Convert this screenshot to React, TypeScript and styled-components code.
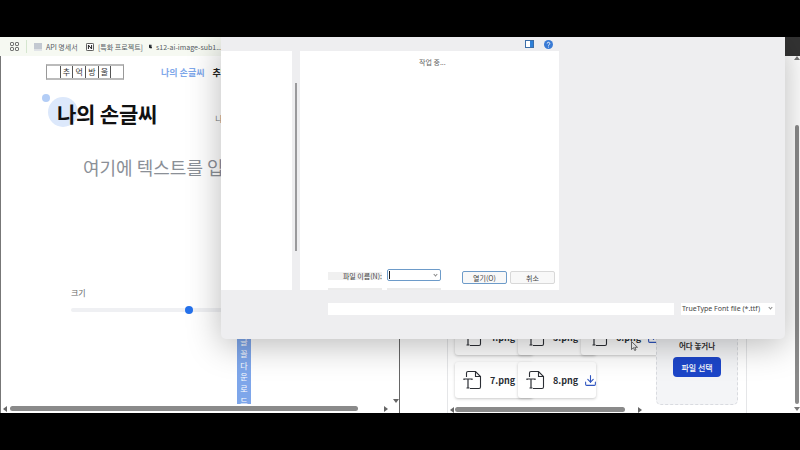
import styled, { createGlobalStyle } from "styled-components";
import { Download } from "lucide-react";

const GlobalStyle = createGlobalStyle`
  html, body {
    margin: 0;
    padding: 0;
    background: #000;
  }
  * {
    box-sizing: border-box;
  }
`;

const Screen = styled.div`
  width: 800px;
  height: 450px;
  overflow: hidden;
  display: flex;
  flex-direction: column;
  background: #000;
  font-family: "Noto Sans CJK KR", "Noto Sans", sans-serif;
`;

const Letterbox = styled.div`
  height: 37px;
  flex: none;
  background: #000;
`;

const Stage = styled.div`
  position: relative;
  height: 376px;
  flex: none;
  display: flex;
  flex-direction: column;
  background: #fff;
  overflow: hidden;
`;

const BookmarkBar = styled.div`
  height: 19px;
  flex: none;
  display: flex;
  align-items: center;
  padding-left: 10px;
  background: #f6f9f2;
`;

const Bookmark = styled.div<{ $w: number }>`
  width: ${(p) => p.$w}px;
  flex: none;
  display: flex;
  align-items: center;
  gap: 4px;
  font-size: 7px;
  color: #555b63;
  white-space: nowrap;
`;

const BarDivider = styled.div`
  width: 1px;
  height: 13px;
  margin: 0 7px 0 7px;
  background: #d5e6cf;
`;

const Corner = styled.div`
  width: 15px;
  height: 19px;
  margin-left: auto;
  background: #333;
`;

const Panes = styled.div`
  flex: 1;
  min-height: 0;
  display: flex;
`;

const LeftPane = styled.div`
  width: 400px;
  flex: none;
  display: flex;
  flex-direction: column;
  border-left: 1px solid #777;
  border-right: 1px solid #666;
  background: #fff;
`;

const LeftScroll = styled.div`
  flex: 1;
  min-height: 0;
  overflow: hidden;
  padding-top: 8px;
  display: flex;
  flex-direction: column;
`;

const Header = styled.div`
  display: flex;
  align-items: center;
  height: 16px;
  flex: none;
  padding-left: 45px;
`;

const Logo = styled.div`
  width: 78px;
  height: 16px;
  display: grid;
  grid-template-columns: repeat(6, 1fr);
  border: 1px solid #999;
  border-top: 2px solid #bbb;
  border-bottom: 2px solid #bbb;
  background: #fff;
`;

const LogoCell = styled.div`
  display: flex;
  align-items: center;
  justify-content: center;
  font-family: "Noto Sans CJK KR", serif;
  font-size: 8px;
  line-height: 1;
  color: #333;
  border-left: 1px solid #555;
  &:first-child {
    border-left: none;
  }
`;

const NavItem = styled.div<{ $active?: boolean }>`
  font-size: 9px;
  font-weight: 700;
  white-space: nowrap;
  color: ${(p) => (p.$active ? "#7fa8ea" : "#222")};
  margin-left: ${(p) => (p.$active ? "37px" : "8px")};
`;

const TitleRow = styled.div`
  display: flex;
  align-items: baseline;
  flex: none;
  margin-top: 21px;
  padding-left: 56px;
`;

const Title = styled.h1`
  position: relative;
  margin: 0;
  font-size: 21px;
  line-height: 24px;
  font-weight: 700;
  letter-spacing: -0.2px;
  color: #111;
  white-space: nowrap;
  z-index: 0;
  &::before {
    content: "";
    position: absolute;
    left: -9px;
    top: -4px;
    width: 30px;
    height: 30px;
    border-radius: 50%;
    background: #dce8fb;
    z-index: -1;
  }
  &::after {
    content: "";
    position: absolute;
    left: -15px;
    top: -7px;
    width: 8px;
    height: 8px;
    border-radius: 50%;
    background: #b3cdf6;
    z-index: -1;
  }
`;

const Subtitle = styled.span`
  margin-left: 58px;
  font-size: 8px;
  color: #777;
  white-space: nowrap;
`;

const Placeholder = styled.div`
  flex: none;
  margin-top: 29px;
  padding-left: 82px;
  font-size: 18px;
  line-height: 26px;
  color: #8b9097;
  white-space: nowrap;
`;

const SizeLabel = styled.div`
  flex: none;
  margin-top: 107px;
  padding-left: 70px;
  font-size: 8px;
  line-height: 12px;
  color: #666;
`;

const Slider = styled.div`
  position: relative;
  flex: none;
  width: 240px;
  height: 4px;
  margin: 9px 0 0 70px;
  border-radius: 2px;
  background: #eff0f3;
`;

const SliderThumb = styled.div`
  position: absolute;
  top: -2px;
  width: 8px;
  height: 8px;
  border-radius: 50%;
  background: #2571eb;
`;

const DownloadButton = styled.div`
  flex: none;
  width: 14px;
  height: 70px;
  margin: 24px 0 0 236px;
  display: flex;
  flex-direction: column;
  align-items: center;
  background: #7ea6ea;
  color: #fff;
  font-size: 8px;
  line-height: 11.8px;
`;

const HBar = styled.div`
  flex: none;
  height: 9px;
  display: flex;
  align-items: center;
  background: #fff;
`;

const ScrollThumb = styled.div<{ $w: number; $ml: number }>`
  width: ${(p) => p.$w}px;
  margin-left: ${(p) => p.$ml}px;
  height: 5px;
  border-radius: 3px;
  background: #8a8a8a;
`;

const ArrowLeft = styled.div`
  flex: none;
  margin-left: 2px;
  border: 3px solid transparent;
  border-left: none;
  border-right: 4px solid #666;
`;

const ArrowRight = styled.div`
  flex: none;
  border: 3px solid transparent;
  border-right: none;
  border-left: 4px solid #666;
`;

const LeftDownArrow = styled.div`
  position: absolute;
  left: 393px;
  top: 362px;
  border: 3px solid transparent;
  border-bottom: none;
  border-top: 4px solid #666;
`;

const RightPane = styled.div`
  flex: 1;
  display: flex;
  min-width: 0;
  background: #fff;
`;

const RightBody = styled.div`
  flex: 1;
  min-width: 0;
  padding-left: 47px;
`;

const Panel = styled.div`
  width: 300px;
  height: 100%;
  display: flex;
  border-left: 1px solid #e5e6e8;
  border-right: 1px solid #e5e6e8;
`;

const FilesColumn = styled.div`
  width: 199px;
  flex: none;
  display: flex;
  flex-direction: column;
  padding-top: 263px;
`;

const FileRow = styled.div`
  height: 36px;
  flex: none;
  display: flex;
  padding-left: 7px;
  margin-bottom: 7px;
`;

const FileCard = styled.div`
  width: 78px;
  flex: none;
  margin-right: -15px;
  display: flex;
  align-items: center;
  padding-left: 8px;
  gap: 7px;
  background: #fff;
  border-radius: 3px;
  box-shadow: 0 1px 3px rgba(0, 0, 0, 0.22);
  font-size: 9px;
  font-weight: 700;
  color: #2b2f36;
`;

const FileIcon = styled.svg`
  width: 20px;
  height: 20px;
  flex: none;
`;

const DownloadIcon = styled(Download)`
  width: 13px;
  height: 13px;
  flex: none;
  margin-left: -1px;
  color: #2f55c0;
`;

const FilesScroll = styled(HBar)`
  margin-top: auto;
  padding-right: 2px;
`;

const DropZone = styled.div`
  width: 82px;
  flex: none;
  height: 349px;
  margin: 0 0 8px 9px;
  align-self: flex-end;
  display: flex;
  flex-direction: column;
  align-items: center;
  justify-content: flex-end;
  padding-bottom: 27px;
  background: #f4f5f7;
  border: 1px dashed #d9dbe0;
  border-radius: 5px;
`;

const DropText = styled.div`
  font-size: 7.5px;
  line-height: 12px;
  font-weight: 700;
  color: #333;
  white-space: nowrap;
`;

const PickButton = styled.div`
  width: 48px;
  height: 20px;
  margin-top: 5px;
  display: flex;
  align-items: center;
  justify-content: center;
  border-radius: 4px;
  background: #1d46c9;
  color: #fff;
  font-size: 8px;
  font-weight: 500;
`;

const VBar = styled.div`
  position: relative;
  width: 7px;
  flex: none;
  background: #fff;
`;

const VThumb = styled.div`
  position: absolute;
  left: 2px;
  top: 69px;
  width: 4px;
  height: 279px;
  border-radius: 2px;
  background: #8a8a8a;
`;

const VArrowUp = styled.div`
  position: absolute;
  left: 1px;
  top: 0;
  border: 3px solid transparent;
  border-top: none;
  border-bottom: 4px solid #777;
`;

const VArrowDown = styled.div`
  position: absolute;
  left: 1px;
  bottom: 2px;
  border: 3px solid transparent;
  border-bottom: none;
  border-top: 4px solid #777;
`;

const Cursor = styled.svg`
  position: absolute;
  left: 631px;
  top: 304px;
  width: 7px;
  height: 10px;
`;

const Dialog = styled.div`
  position: absolute;
  left: 221px;
  top: 0;
  width: 564px;
  height: 302px;
  display: flex;
  flex-direction: column;
  background: #eeeef0;
  border-radius: 0 0 5px 5px;
  box-shadow: 0 6px 34px rgba(0, 0, 0, 0.28);
`;

const DialogToolbar = styled.div`
  height: 14px;
  flex: none;
  display: flex;
  align-items: center;
  padding-left: 304px;
  gap: 10px;
`;

const DialogBody = styled.div`
  height: 239px;
  flex: none;
  display: flex;
`;

const NavPane = styled.div`
  width: 71px;
  flex: none;
  background: #fff;
`;

const NavScroll = styled.div`
  width: 8px;
  flex: none;
  padding: 32px 0 0 3px;
  background: #eeeef0;
`;

const NavThumb = styled.div`
  width: 2px;
  height: 168px;
  background: #9a9a9c;
`;

const MainPane = styled.div`
  width: 259px;
  flex: none;
  display: flex;
  flex-direction: column;
  overflow: hidden;
  background: #fff;
  padding: 0 4px 0 28px;
`;

const Status = styled.div`
  flex: none;
  height: 218px;
  padding: 5px 0 0 91px;
  font-size: 7px;
  line-height: 12px;
  color: #666;
`;

const FormRow = styled.div`
  flex: none;
  height: 19px;
  display: flex;
  align-items: flex-start;
`;

const FieldLabel = styled.div`
  width: 54px;
  height: 8px;
  margin-top: 3px;
  flex: none;
  display: flex;
  align-items: center;
  justify-content: flex-end;
  background: #f0f0f0;
  font-size: 7px;
  color: #444;
  white-space: nowrap;
`;

const NameInput = styled.div`
  position: relative;
  width: 54px;
  height: 12px;
  margin-left: 5px;
  flex: none;
  border: 1px solid #6d9bc9;
  border-radius: 2px;
  background: #fff;
  &::before {
    content: "";
    position: absolute;
    left: 1px;
    top: 1px;
    width: 1px;
    height: 8px;
    background: #222;
  }
`;

const Caret = styled.span`
  position: absolute;
  right: 3px;
  top: 3px;
  width: 3px;
  height: 3px;
  border-right: 1px solid #888;
  border-bottom: 1px solid #888;
  transform: rotate(45deg);
`;

const DialogButton = styled.div<{ $primary?: boolean }>`
  width: 45px;
  height: 13px;
  margin: 2px 0 0 ${(p) => (p.$primary ? "21px" : "3px")};
  flex: none;
  display: flex;
  align-items: center;
  justify-content: center;
  border: 1px solid ${(p) => (p.$primary ? "#6d9bc9" : "#d8d8d8")};
  border-radius: 2px;
  background: #f8f8f8;
  font-size: 7px;
  color: #444;
`;

const GhostRow = styled.div`
  flex: none;
  display: flex;
  gap: 5px;
`;

const GhostField = styled.div`
  width: 54px;
  height: 2px;
  background: #f2f2f2;
  border: 1px solid #ececec;
`;

const DialogFooter = styled.div`
  flex: 1;
  display: flex;
  align-items: flex-start;
  padding: 13px 0 0 107px;
  gap: 7px;
`;

const PathInput = styled.div`
  width: 346px;
  height: 12px;
  flex: none;
  background: #fff;
`;

const TypeSelect = styled.div`
  position: relative;
  width: 94px;
  height: 12px;
  flex: none;
  padding-left: 1px;
  background: #fff;
  font-family: "Noto Sans", sans-serif;
  font-size: 7px;
  line-height: 12px;
  color: #444;
  white-space: nowrap;
`;

const GridIcon = () => (
  <svg width="9" height="9" viewBox="0 0 9 9" fill="none" stroke="#555" strokeWidth="1">
    <rect x="0.5" y="0.5" width="3" height="3" rx="0.8" />
    <rect x="5.5" y="0.5" width="3" height="3" rx="0.8" />
    <rect x="0.5" y="5.5" width="3" height="3" rx="0.8" />
    <rect x="5.5" y="5.5" width="3" height="3" rx="0.8" />
  </svg>
);

const DocGlyph = () => (
  <svg width="8" height="8" viewBox="0 0 8 8">
    <rect width="8" height="6.5" fill="#c3c9d1" />
    <rect y="6.5" width="8" height="1.5" fill="#e1e4e8" />
  </svg>
);

const NotionGlyph = () => (
  <svg width="8" height="8" viewBox="0 0 8 8">
    <rect x="0.4" y="0.4" width="7.2" height="7.2" rx="1" fill="#fff" stroke="#222" strokeWidth="0.8" />
    <path d="M2.4 6V2l3.2 4V2" fill="none" stroke="#222" strokeWidth="1" />
  </svg>
);

const RepoGlyph = () => (
  <svg width="8" height="9" viewBox="0 0 8 9">
    <path d="M0 0h6.5v6.5H8V9H2.5L0 7z" fill="#16181c" />
    <rect x="2" y="2" width="2" height="2" fill="#9fb4c8" />
  </svg>
);

const FontFile = () => (
  <FileIcon viewBox="0 0 20 20" fill="none" stroke="#2c2f35" strokeWidth="1.1">
    <path d="M3.5 7V3a1.5 1.5 0 0 1 1.5-1.5h7.5l5 5V17a1.5 1.5 0 0 1-1.5 1.5H7" />
    <path d="M12.5 1.5V6.5h5" />
    <path d="M1 10V9h8v1M5 9v9M3.5 18h3" strokeWidth="1.2" />
  </FileIcon>
);

const SidebarIcon = () => (
  <svg width="9" height="8" viewBox="0 0 9 8">
    <rect x="0.5" y="0.5" width="8" height="7" fill="#fff" stroke="#3c6ea8" />
    <rect x="5" y="1" width="3" height="6" fill="#2f80d8" />
  </svg>
);

const HelpIcon = () => (
  <svg width="9" height="9" viewBox="0 0 9 9">
    <circle cx="4.5" cy="4.5" r="4.5" fill="#3a7bd5" />
    <path d="M3.2 3.5a1.3 1.3 0 1 1 1.9 1.2c-.4.2-.6.4-.6.9" fill="none" stroke="#fff" strokeWidth="0.9" />
    <circle cx="4.5" cy="7" r="0.5" fill="#fff" />
  </svg>
);

const logoCells = ["", "추", "억", "방", "울", ""];
const downloadChars = ["글", "꼴", "다", "운", "로", "드"];
const topFiles = ["4.png", "5.png", "6.png"];
const bottomFiles = ["7.png", "8.png"];
const sliderValue = 0.49;

export default function App() {
  return (
    <Screen>
      <GlobalStyle />
      <Letterbox />
      <Stage>
        <BookmarkBar>
          <GridIcon />
          <BarDivider />
          <Bookmark $w={52}>
            <DocGlyph />
            API 명세서
          </Bookmark>
          <Bookmark $w={63}>
            <NotionGlyph />
            [특화 프로젝트]
          </Bookmark>
          <Bookmark $w={73}>
            <RepoGlyph />
            s12-ai-image-sub1...
          </Bookmark>
          <Corner />
        </BookmarkBar>

        <Panes>
          <LeftPane>
            <LeftScroll>
              <Header>
                <Logo>
                  {logoCells.map((c, i) => (
                    <LogoCell key={i}>{c}</LogoCell>
                  ))}
                </Logo>
                <NavItem $active>나의 손글씨</NavItem>
                <NavItem>추억 방울</NavItem>
              </Header>
              <TitleRow>
                <Title>나의 손글씨</Title>
                <Subtitle>나만의 손글씨</Subtitle>
              </TitleRow>
              <Placeholder>여기에 텍스트를 입력하세요</Placeholder>
              <SizeLabel>크기</SizeLabel>
              <Slider>
                <SliderThumb style={{ left: `${sliderValue * 240 - 4}px` }} />
              </Slider>
              <DownloadButton>
                {downloadChars.map((c) => (
                  <span key={c}>{c}</span>
                ))}
              </DownloadButton>
            </LeftScroll>
            <HBar>
              <ArrowLeft />
              <ScrollThumb $w={348} $ml={3} />
              <ArrowRight style={{ marginLeft: 26 }} />
            </HBar>
          </LeftPane>

          <RightPane>
            <RightBody>
              <Panel>
                <FilesColumn>
                  <FileRow>
                    {topFiles.map((name) => (
                      <FileCard key={name}>
                        <FontFile />
                        {name}
                        <DownloadIcon />
                      </FileCard>
                    ))}
                  </FileRow>
                  <FileRow>
                    {bottomFiles.map((name) => (
                      <FileCard key={name}>
                        <FontFile />
                        {name}
                        <DownloadIcon />
                      </FileCard>
                    ))}
                  </FileRow>
                  <FilesScroll>
                    <ArrowLeft />
                    <ScrollThumb $w={170} $ml={1} />
                    <ArrowRight style={{ marginLeft: 13 }} />
                  </FilesScroll>
                </FilesColumn>
                <DropZone>
                  <DropText>파일을 여기에 끌</DropText>
                  <DropText>어다 놓거나</DropText>
                  <PickButton>파일 선택</PickButton>
                </DropZone>
              </Panel>
            </RightBody>
            <VBar>
              <VArrowUp />
              <VThumb />
              <VArrowDown />
            </VBar>
          </RightPane>
        </Panes>

        <LeftDownArrow />
        <Cursor viewBox="0 0 7 10">
          <path d="M0.5 0.5v8l2-1.8 1.2 2.8 1.3-.6-1.2-2.6H6.5z" fill="#fff" stroke="#333" strokeWidth="0.7" />
        </Cursor>

        <Dialog>
          <DialogToolbar>
            <SidebarIcon />
            <HelpIcon />
          </DialogToolbar>
          <DialogBody>
            <NavPane />
            <NavScroll>
              <NavThumb />
            </NavScroll>
            <MainPane>
              <Status>작업 중...</Status>
              <FormRow>
                <FieldLabel>파일 이름(N):</FieldLabel>
                <NameInput>
                  <Caret />
                </NameInput>
                <DialogButton $primary>열기(O)</DialogButton>
                <DialogButton>취소</DialogButton>
              </FormRow>
              <GhostRow>
                <GhostField />
                <GhostField />
              </GhostRow>
            </MainPane>
          </DialogBody>
          <DialogFooter>
            <PathInput />
            <TypeSelect>
              TrueType Font file (*.ttf)
              <Caret />
            </TypeSelect>
          </DialogFooter>
        </Dialog>
      </Stage>
      <Letterbox />
    </Screen>
  );
}
